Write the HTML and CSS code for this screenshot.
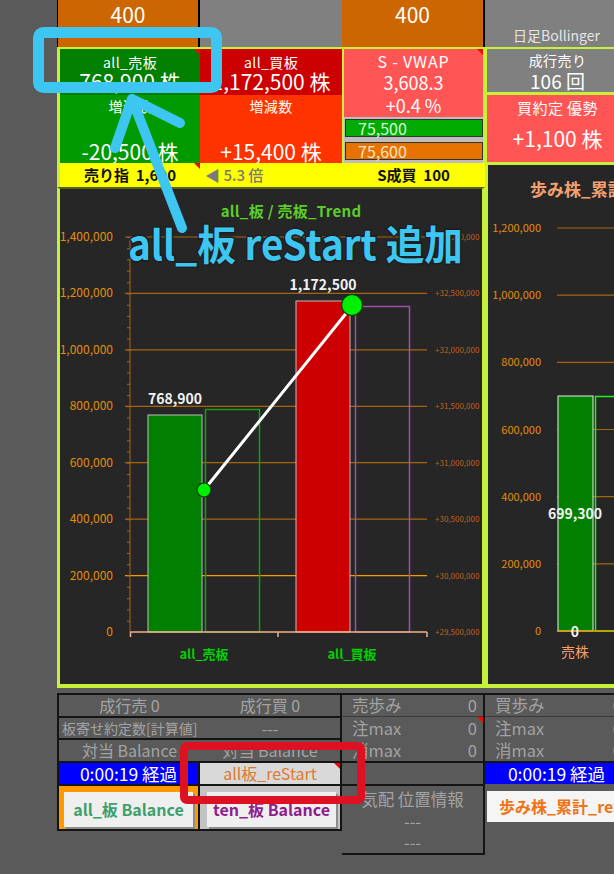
FILE: index.html
```html
<!DOCTYPE html>
<html lang="ja">
<head>
  <meta charset="UTF-8">
  <title>板 Balance モニター</title>
  <link rel="stylesheet" href="styles.css">
</head>
<body>
<div class="screen">

  <div class="top">
    <div class="main">
      <div class="tiles">
        <div class="stack">
          <div class="price price-l">400</div>
          <div class="tile total sell flag">
            <span class="cap">all_売板</span>
            <span class="big">768,900 株</span>
          </div>
          <div class="tile diff sell-diff">
            <span class="cap">増減数</span>
            <span class="big">-20,500 株</span>
          </div>
        </div>
        <div class="stack">
          <div class="blank"></div>
          <div class="tile total buy">
            <span class="cap">all_買板</span>
            <span class="big">1,172,500 株</span>
          </div>
          <div class="tile diff buy-diff">
            <span class="cap">増減数</span>
            <span class="big">+15,400 株</span>
          </div>
        </div>
        <div class="stack">
          <div class="price price-r">400</div>
          <div class="tile vwap flag">
            <span class="cap">S - VWAP</span>
            <span class="mid">3,608.3</span>
            <span class="mid">+0.4 %</span>
          </div>
          <div class="bands">
            <div class="band band-bid">75,500</div>
            <div class="band band-ask">75,600</div>
          </div>
        </div>
      </div>

      <div class="ybar">
        <div class="flag">売り指  1,600</div>
        <div class="ratio">◀ 5.3 倍</div>
        <div>S成買  100</div>
      </div>

      <!-- all_板 trend chart -->
      <div class="chart">
        <svg class="plot" width="422" height="495" viewBox="60 189 422 495">
          <text class="plot-title" x="291" y="217" text-anchor="middle">all_板 / 売板_Trend</text>
          <path class="grid" d="M125 237H427M125 293.4H427M125 349.9H427M125 406.3H427M125 462.7H427M125 519.1H427"/>
          <path class="grid grid-hot" d="M125 575.6H427"/>
          <path class="axis" d="M130 237V632"/>
          <path class="minor" d="M128.5 237V632"/>
          <g class="ylab" text-anchor="end">
            <text x="113" y="241">1,400,000</text>
            <text x="113" y="297.4">1,200,000</text>
            <text x="113" y="353.9">1,000,000</text>
            <text x="113" y="410.3">800,000</text>
            <text x="113" y="466.7">600,000</text>
            <text x="113" y="523.1">400,000</text>
            <text x="113" y="579.6">200,000</text>
            <text x="113" y="636">0</text>
          </g>
          <g class="ylab2">
            <text x="435" y="240">+33,000,000</text>
            <text x="435" y="296.4">+32,500,000</text>
            <text x="435" y="352.9">+32,000,000</text>
            <text x="435" y="409.3">+31,500,000</text>
            <text x="435" y="465.7">+31,000,000</text>
            <text x="435" y="522.1">+30,500,000</text>
            <text x="435" y="578.6">+30,000,000</text>
            <text x="435" y="635">+29,500,000</text>
          </g>
          <rect class="bar-sell" x="148" y="415" width="54" height="217"/>
          <rect class="ghost-sell" x="205.5" y="409.5" width="54" height="222.5"/>
          <rect class="bar-buy" x="296" y="301" width="54" height="331"/>
          <rect class="ghost-buy" x="355.5" y="306.5" width="54" height="325.5"/>
          <path class="base" d="M130 632H427M130.5 632v5M278 632v5M427 632v5"/>
          <text class="val" x="175" y="404" text-anchor="middle">768,900</text>
          <text class="val" x="323" y="290" text-anchor="middle">1,172,500</text>
          <path class="trend" d="M204 490L352 306"/>
          <circle class="dot" cx="204" cy="490" r="7"/>
          <circle class="dot" cx="352" cy="305" r="10.5"/>
          <text class="xlab" x="204" y="659" text-anchor="middle">all_売板</text>
          <text class="xlab" x="352" y="659" text-anchor="middle">all_買板</text>
        </svg>
      </div>
    </div>

    <div class="side">
      <div class="s-head">日足Bollinger</div>
      <div class="tile s-count">
        <span class="cap">成行売り</span>
        <span class="big">106 回</span>
      </div>
      <div class="tile s-buy">
        <span class="cap">買約定 優勢</span>
        <span class="big">+1,100 株</span>
      </div>
      <div class="s-chart">
        <svg width="140" height="519" viewBox="488 165 140 519">
          <text class="plot-title2" x="530" y="196">歩み株_累計_Trend</text>
          <path class="grid" d="M557 228H628M557 295.2H628M557 362.3H628M557 429.5H628M557 496.7H628M557 563.8H628"/>
          <g class="ylab ylab-s" text-anchor="end">
            <text x="541" y="232">1,200,000</text>
            <text x="541" y="299.2">1,000,000</text>
            <text x="541" y="366.3">800,000</text>
            <text x="541" y="433.5">600,000</text>
            <text x="541" y="500.7">400,000</text>
            <text x="541" y="567.8">200,000</text>
            <text x="541" y="635">0</text>
          </g>
          <rect class="bar-walk" x="558" y="396" width="35" height="235"/>
          <rect class="ghost-walk" x="595.5" y="396.5" width="40" height="234.5"/>
          <path class="base-s" d="M557 631H628"/>
          <text class="val" x="575" y="519" text-anchor="middle">699,300</text>
          <text class="val" x="575" y="637" text-anchor="middle">0</text>
          <text class="xlab2" x="575" y="657" text-anchor="middle">売株</text>
        </svg>
      </div>
    </div>
  </div>

  <div class="bottom">
    <div class="tbl tbl-left">
      <div class="trow"><span>成行売 0</span><span>成行買 0</span></div>
      <div class="trow trow-b"><span class="lft">板寄せ約定数[計算値]</span><span>---</span></div>
      <div class="trow"><span>対当 Balance</span><span>対当 Balance</span></div>
      <div class="trow trow-d"><span class="elapsed">0:00:19 経過</span><span class="restart flag">all板_reStart</span></div>
      <div class="trow trow-e">
        <span class="well well-on"><span class="btn btn-all">all_板 Balance</span></span>
        <span class="well"><span class="btn btn-ten">ten_板 Balance</span></span>
      </div>
    </div>

    <div class="tbl tbl-mid">
      <div class="kv kv-first"><span>売歩み</span><span>0</span></div>
      <div class="kv flag"><span>注max</span><span>0</span></div>
      <div class="kv kv-last"><span>消max</span><span>0</span></div>
      <div class="void"></div>
      <div class="quote">
        <span>気配 位置情報</span>
        <span>---</span>
        <span>---</span>
      </div>
    </div>

    <div class="tbl-right">
      <div class="kv kv-first"><span>買歩み</span><span>0</span></div>
      <div class="kv"><span>注max</span><span>0</span></div>
      <div class="kv kv-last"><span>消max</span><span>0</span></div>
      <div class="elapsed">0:00:19 経過</div>
      <div class="btn btn-walk">歩み株_累計_reStart</div>
    </div>
  </div>

  <!-- review marks drawn over the sheet -->
  <svg class="marks" width="614" height="874" viewBox="0 0 614 874">
    <rect class="mk-blue" x="38.5" y="32.5" width="178" height="55" rx="5"/>
    <path class="mk-arrow" d="M182 228L132 99M115 148L132 99L180 123"/>
    <text class="mk-text" x="128" y="260" textLength="335" lengthAdjust="spacingAndGlyphs">all_板 reStart 追加</text>
    <rect class="mk-red" x="184" y="746" width="177" height="54" rx="3"/>
  </svg>

</div>
</body>
</html>
```

FILE: styles.css
```css
* {
  box-sizing: border-box;
}

body {
  margin: 0;
  background: #5a5a5a;
  font-family: "Noto Sans CJK JP", "Noto Sans", sans-serif;
  color: #fff;
}

.screen {
  position: relative;
  width: 614px;
  height: 874px;
  overflow: hidden;
  padding-left: 57px;
}

.top {
  display: flex;
  width: 571px;
}

.main {
  width: 428px;
  flex: none;
}

.side {
  width: 143px;
  flex: none;
}

.flag {
  position: relative;
}

.flag::after {
  content: "";
  position: absolute;
  top: 0;
  right: 0;
  border-top: 6px solid #ff0000;
  border-left: 6px solid transparent;
}

/* tiles */
.tiles {
  display: grid;
  grid-template-columns: 143px 142px 143px;
}

.stack {
  display: flex;
  flex-direction: column;
}

.price {
  height: 47px;
  background: #cc6600;
  font-size: 21px;
  line-height: 29px;
  text-align: center;
}

.price-l {
  border-left: 1px solid #000;
  border-right: 2px solid #000;
}

.price-r {
  border-right: 2px solid #000;
}

.blank {
  height: 47px;
  background: #808080;
}

.tile {
  display: flex;
  flex-direction: column;
  align-items: center;
  white-space: nowrap;
}

.cap {
  font-size: 14px;
  line-height: 18px;
  letter-spacing: 0.4px;
}

.big {
  font-size: 21px;
  line-height: 20px;
}

.total {
  height: 48px;
  border-top: 2px solid #c6f03a;
  padding-top: 4px;
}

.diff {
  height: 68px;
  padding-top: 2px;
  justify-content: space-between;
}

.diff .big {
  line-height: 24px;
}

.sell {
  background: #007f00;
  border-left: 3px solid #c6f03a;
}

.sell-diff {
  background: #009a00;
  border-left: 3px solid #c6f03a;
}

.buy {
  background: #cc0000;
}

.buy-diff {
  background: #ff3300;
}

.vwap {
  height: 70px;
  background: #ff5555;
  border: 2px solid #c6f03a;
  border-bottom: 0;
  padding-top: 2px;
}

.vwap .cap {
  font-size: 16px;
  line-height: 20px;
  letter-spacing: 0.8px;
}

.mid {
  font-size: 18px;
  line-height: 23px;
}

.bands {
  height: 46px;
  background: #bdbdbd;
  border-left: 2px solid #c6f03a;
  border-right: 2px solid #c6f03a;
  padding: 2px 0 3px 1px;
  display: flex;
  flex-direction: column;
  gap: 5px;
}

.band {
  height: 18px;
  border: 1px solid #333;
  font-size: 16px;
  line-height: 16px;
  padding-left: 12px;
}

.band-bid {
  background: #00aa00;
  color: #d8ffd8;
}

.band-ask {
  background: #e67300;
  color: #ffe4c8;
}

.ybar {
  display: grid;
  grid-template-columns: 140px 142px 143px;
  height: 24px;
  background: #ffff00;
  border-left: 3px solid #c6f03a;
  color: #111;
  font-size: 15px;
  font-weight: 700;
  line-height: 24px;
  white-space: pre;
  text-align: center;
}

.ybar .ratio {
  text-align: left;
  padding-left: 5px;
  color: #7a7a7a;
  font-weight: 500;
}

/* charts */
.chart {
  height: 501px;
  background: #262626;
  border: 3px solid #c6f03a;
  border-top: 2px solid #56621f;
  border-bottom-width: 4px;
}

.chart svg,
.s-chart svg {
  display: block;
}

.plot text {
  font-family: "Noto Sans CJK JP", "Noto Sans", sans-serif;
}

.plot-title {
  fill: #5ccc2c;
  font-size: 15px;
  font-weight: 700;
  letter-spacing: 0.3px;
}

.plot-title2 {
  fill: #f2a070;
  font-size: 17px;
  font-weight: 700;
}

.grid {
  stroke: #a8650f;
  stroke-width: 1.2;
  fill: none;
}

.grid-hot {
  stroke: #f59a00;
}

.axis {
  stroke: #a8650f;
  stroke-width: 1;
}

.minor {
  stroke: #a8650f;
  stroke-width: 3;
  stroke-dasharray: 1 10.286;
}

.ylab text {
  fill: #e28d0a;
  font-size: 12px;
}

.ylab-s text {
  font-size: 11px;
}

.ylab2 text {
  fill: #c0621c;
  font-size: 8px;
}

.bar-sell {
  fill: #007f00;
  stroke: #bdbdbd;
}

.ghost-sell {
  fill: none;
  stroke: #10a010;
  stroke-width: 1.5;
}

.bar-buy {
  fill: #cc0000;
  stroke: #bdbdbd;
}

.ghost-buy {
  fill: none;
  stroke: #a050a8;
  stroke-width: 1.5;
}

.base {
  stroke: #f0b088;
  stroke-width: 1.5;
  fill: none;
}

.val {
  fill: #f2f2f2;
  font-size: 14px;
  font-weight: 700;
}

.trend {
  stroke: #fff;
  stroke-width: 3;
  stroke-linecap: round;
}

.dot {
  fill: #00ee00;
  stroke: #0a3a0a;
  stroke-width: 1.2;
}

.xlab {
  fill: #00d000;
  font-size: 13px;
  font-weight: 700;
}

.xlab2 {
  fill: #f2a070;
  font-size: 14px;
}

.bar-walk {
  fill: #007f00;
  stroke: #ececec;
}

.ghost-walk {
  fill: none;
  stroke: #22ee22;
  stroke-width: 1.5;
}

.base-s {
  stroke: #e0a000;
  stroke-width: 1.5;
}

/* right column */
.s-head {
  height: 47px;
  background: #808080;
  color: #e6e6e6;
  font-size: 14px;
  line-height: 20px;
  text-align: center;
  padding-top: 25px;
}

.s-count {
  height: 48px;
  background: #808080;
  border-top: 2px solid #c6f03a;
  border-bottom: 3px solid #c6f03a;
  border-left: 2px solid #c6f03a;
  padding-top: 1px;
}

.s-count .cap {
  font-size: 14px;
  line-height: 20px;
}

.s-count .big {
  font-size: 19px;
  line-height: 22px;
}

.s-buy {
  height: 70px;
  background: #ff5555;
  border-left: 2px solid #c6f03a;
  border-bottom: 3px solid #c6f03a;
  padding-top: 3px;
}

.s-buy .cap {
  font-size: 15px;
  line-height: 20px;
}

.s-buy .big {
  margin-top: 7px;
  line-height: 26px;
}

.s-chart {
  height: 523px;
  background: #262626;
  border-left: 3px solid #c6f03a;
  border-bottom: 4px solid #c6f03a;
}

/* bottom tables */
.bottom {
  display: flex;
  align-items: flex-start;
  width: 571px;
  margin-top: 5px;
  color: #a3a3a3;
  font-size: 16px;
  white-space: nowrap;
}

.bottom > div {
  flex: none;
}

.tbl {
  border: 2px solid #141414;
}

.tbl-left {
  width: 285px;
}

.trow {
  display: grid;
  grid-template-columns: 141px 140px;
  height: 23px;
  line-height: 21px;
  border-bottom: 2px solid #141414;
  text-align: center;
}

.trow-b {
  height: 22px;
  line-height: 20px;
}

.trow-b .lft {
  text-align: left;
  padding-left: 3px;
  font-size: 14px;
}

.trow-d > span:first-child,
.trow-e > span:first-child {
  border-right: 2px solid #141414;
}

.trow-e {
  height: 43px;
  border-bottom: 0;
}

.elapsed {
  background: #0000ff;
  color: #fff;
  font-size: 17.5px;
}

.restart {
  background: #d9d9d9;
  color: #dd7a30;
}

.well {
  background: #c3c3c3;
  padding: 6px 0 0 7px;
}

.well-on {
  background: #ff9900;
  padding-left: 5px;
}

.btn {
  display: block;
  width: 129px;
  height: 35px;
  background: #efefef;
  box-shadow: 2px 2px 0 #8c8c8c;
  font-weight: 700;
  line-height: 35px;
  text-align: center;
}

.btn-all {
  color: #3ea06c;
}

.btn-ten {
  color: #8e1d8e;
}

.tbl-mid {
  width: 143px;
  border-left: 0;
}

.kv {
  display: flex;
  justify-content: space-between;
  height: 22px;
  line-height: 22px;
  padding: 0 6px 0 10px;
  font-size: 16.5px;
}

.kv-first {
  line-height: 21px;
  border-bottom: 1px solid #3a3a3a;
}

.kv-last {
  height: 24px;
  border-bottom: 2px solid #141414;
}

.void {
  height: 23px;
  border-bottom: 2px solid #141414;
}

.quote {
  height: 67px;
  padding-top: 3px;
  display: flex;
  flex-direction: column;
  align-items: center;
  font-size: 16.5px;
  line-height: 21.5px;
}

.tbl-right {
  width: 143px;
  border-top: 2px solid #141414;
}

.tbl-right .kv {
  padding-right: 6px;
}

.tbl-right .elapsed {
  height: 21px;
  line-height: 21px;
  text-align: center;
}

.btn-walk {
  width: 141px;
  height: 31px;
  margin: 7px 0 0 2px;
  background: #f5f5f5;
  box-shadow: none;
  color: #f07214;
  text-align: left;
  padding-left: 12px;
  line-height: 31px;
}

/* overlay marks */
.marks {
  position: absolute;
  top: 0;
  left: 0;
  pointer-events: none;
}

.mk-blue {
  fill: none;
  stroke: #3ec6f2;
  stroke-width: 11;
}

.mk-arrow {
  fill: none;
  stroke: #3ec6f2;
  stroke-width: 10;
  stroke-linecap: round;
  stroke-linejoin: round;
}

.mk-text {
  fill: #3ec6f2;
  stroke: #1e1e1e;
  stroke-width: 3;
  paint-order: stroke;
  font-family: "Noto Sans CJK JP", "Noto Sans", sans-serif;
  font-size: 41px;
  font-weight: 700;
}

.mk-red {
  fill: none;
  stroke: #dd1122;
  stroke-width: 8;
}
```
